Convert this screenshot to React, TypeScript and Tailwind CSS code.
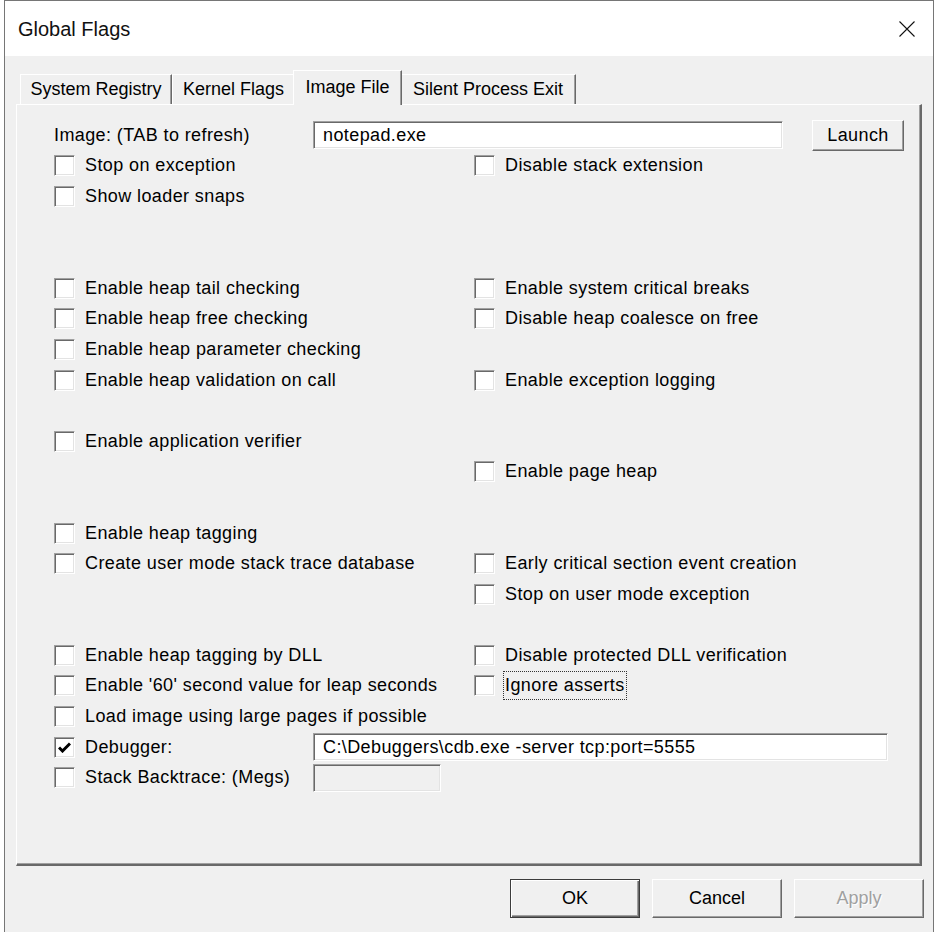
import React from "react";

type Row = [string | null, string | null];

const rows: Row[] = [
  ["Stop on exception", "Disable stack extension"],
  ["Show loader snaps", null],
  [null, null],
  [null, null],
  ["Enable heap tail checking", "Enable system critical breaks"],
  ["Enable heap free checking", "Disable heap coalesce on free"],
  ["Enable heap parameter checking", null],
  ["Enable heap validation on call", "Enable exception logging"],
  [null, null],
  ["Enable application verifier", null],
  [null, "Enable page heap"],
  [null, null],
  ["Enable heap tagging", null],
  ["Create user mode stack trace database", "Early critical section event creation"],
  [null, "Stop on user mode exception"],
  [null, null],
  ["Enable heap tagging by DLL", "Disable protected DLL verification"],
  ["Enable '60' second value for leap seconds", "Ignore asserts"],
  ["Load image using large pages if possible", null],
];

const sunken =
  "border border-t-[#a0a0a0] border-l-[#a0a0a0] border-b-white border-r-white shadow-[inset_1px_1px_0_#696969,inset_-1px_-1px_0_#e3e3e3]";

const Box = ({ checked }: { checked?: boolean }) => (
  <div className={`w-[21px] h-[21px] shrink-0 bg-white flex items-center justify-center ${sunken}`}>
    {checked && (
      <svg width="13" height="11" viewBox="0 0 13 11">
        <path d="M1 5.5 L4.5 9 L12 1.5" stroke="#000" strokeWidth="3" fill="none" />
      </svg>
    )}
  </div>
);

const Check = ({ label, checked, focused }: { label: string; checked?: boolean; focused?: boolean }) => (
  <div className="flex items-center">
    <Box checked={checked} />
    <span
      className={`ml-[8px] px-[1px] h-[29px] flex items-center border ${
        focused ? "border-dotted border-[#333]" : "border-transparent"
      }`}
    >
      {label}
    </span>
  </div>
);

const Tab = ({ label, width, active }: { label: string; width: number; active?: boolean }) => {
  if (active) {
    return (
      <div
        className="relative z-10 -mx-[2px] -mb-[1px] h-[35px] bg-[#f0f0f0] border-t border-l border-white border-r border-r-[#696969] shadow-[inset_-1px_0_0_#a0a0a0] flex justify-center pt-[3px]"
        style={{ width: width + 4 }}
      >
        {label}
      </div>
    );
  }
  return (
    <div
      className="h-[30px] bg-[#f0f0f0] border-t border-l border-white border-r border-r-[#696969] shadow-[inset_-1px_0_0_#a0a0a0] flex items-center justify-center"
      style={{ width }}
    >
      {label}
    </div>
  );
};

const Button = ({ label, isDefault, disabled }: { label: string; isDefault?: boolean; disabled?: boolean }) => (
  <button
    className={`w-[130px] h-[39px] bg-[#f0f0f0] text-[18px] ${
      isDefault
        ? "border border-[#3c3c3c] shadow-[inset_1px_1px_0_#fff,inset_-1px_-1px_0_#696969,inset_-2px_-2px_0_#a0a0a0]"
        : "border border-t-white border-l-white border-r-[#696969] border-b-[#696969] shadow-[inset_-1px_-1px_0_#a0a0a0]"
    } ${disabled ? "text-[#a0a0a0] [text-shadow:1px_1px_0_#fff]" : "text-black"}`}
  >
    {label}
  </button>
);

const App = () => {
  return (
    <div className="w-[936px] h-[932px] bg-white overflow-hidden font-['Liberation_Sans',Arial,sans-serif] text-black">
      <div className="ml-[4px] w-[930px] h-[960px] border border-[#767676] flex flex-col">
        {/* title bar */}
        <div className="h-[55px] bg-white flex items-center justify-between pl-[13px] pr-[18px] shrink-0">
          <span className="text-[20px] text-[#111]">Global Flags</span>
          <svg width="16" height="16" viewBox="0 0 16 16">
            <path d="M0.5 0.5 L15.5 15.5 M15.5 0.5 L0.5 15.5" stroke="#111" strokeWidth="1.1" />
          </svg>
        </div>

        <div className="flex-1 bg-[#f0f0f0] flex flex-col text-[18px] tracking-[0.4px]">
          {/* tabs */}
          <div className="mt-[14px] h-[34px] flex items-end pl-[15px] tracking-[0px]">
            <Tab label="System Registry" width={152} />
            <Tab label="Kernel Flags" width={123} />
            <Tab label="Image File" width={105} active />
            <Tab label="Silent Process Exit" width={176} />
          </div>

          {/* panel */}
          <div className="ml-[11px] w-[906px] h-[762px] border-t border-l border-white border-r-2 border-b-2 border-r-[#696969] border-b-[#696969] shadow-[inset_-1px_-1px_0_#a0a0a0] pl-[37px] pt-[15px]">
            <div className="h-[30.6px] flex items-center">
              <span className="w-[259px] shrink-0">Image: (TAB to refresh)</span>
              <div className={`w-[470px] h-[28px] bg-white flex items-center pl-[9px] ${sunken}`}>notepad.exe</div>
              <button className="ml-[29px] w-[92px] h-[31px] bg-[#f0f0f0] border border-t-white border-l-white border-r-[#696969] border-b-[#696969] shadow-[inset_-1px_-1px_0_#a0a0a0]">
                Launch
              </button>
            </div>

            {rows.map(([l, r], i) => (
              <div key={i} className="h-[30.6px] grid grid-cols-[420px_1fr] items-center">
                <div>{l && <Check label={l} />}</div>
                <div>{r && <Check label={r} focused={r === "Ignore asserts"} />}</div>
              </div>
            ))}

            <div className="h-[30.6px] flex items-center">
              <div className="w-[259px] shrink-0">
                <Check label="Debugger:" checked />
              </div>
              <div className={`w-[575px] h-[28px] bg-white flex items-center pl-[9px] ${sunken}`}>
                C:\Debuggers\cdb.exe -server tcp:port=5555
              </div>
            </div>
            <div className="h-[30.6px] flex items-center">
              <div className="w-[259px] shrink-0">
                <Check label="Stack Backtrace: (Megs)" />
              </div>
              <div className={`w-[128px] h-[28px] bg-[#f0f0f0] ${sunken}`} />
            </div>
          </div>

          {/* buttons */}
          <div className="mt-[13px] flex justify-end gap-[12px] pr-[9px] tracking-[0px]">
            <Button label="OK" isDefault />
            <Button label="Cancel" />
            <Button label="Apply" disabled />
          </div>
        </div>
      </div>
    </div>
  );
};

export default App;
